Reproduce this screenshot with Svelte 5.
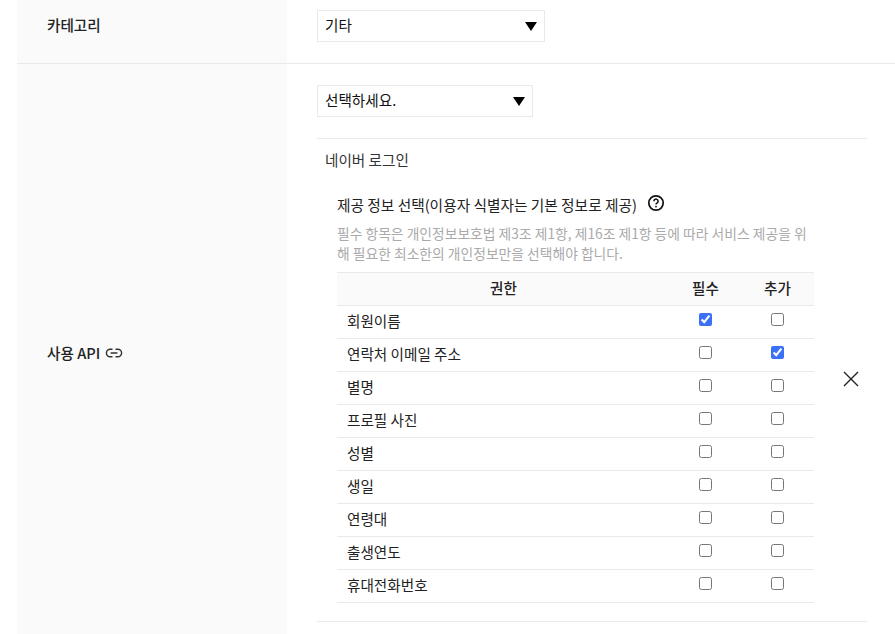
<script lang="ts">
	const perms = [
		{ name: '회원이름', required: true, extra: false },
		{ name: '연락처 이메일 주소', required: false, extra: true },
		{ name: '별명', required: false, extra: false },
		{ name: '프로필 사진', required: false, extra: false },
		{ name: '성별', required: false, extra: false },
		{ name: '생일', required: false, extra: false },
		{ name: '연령대', required: false, extra: false },
		{ name: '출생연도', required: false, extra: false },
		{ name: '휴대전화번호', required: false, extra: false }
	];
</script>

<div class="form">
	<div class="row first">
		<div class="label">카테고리</div>
		<div class="field">
			<div class="select cat">기타</div>
		</div>
	</div>

	<div class="row">
		<div class="label">
			사용 API
			<svg class="link" width="18" height="18" viewBox="0 0 18 18" fill="none" stroke="#333" stroke-width="1.4">
				<path d="M7.5 5.2H5.2a3.8 3.8 0 0 0 0 7.6h2.3M10.5 5.2h2.3a3.8 3.8 0 0 1 0 7.6h-2.3M5.6 9h6.8" />
			</svg>
		</div>
		<div class="field api">
			<div class="select pick">선택하세요.</div>

			<div class="api-block">
				<div class="api-body">
					<p class="api-name">네이버 로그인</p>
					<div class="info">
						<div class="info-title">
							제공 정보 선택(이용자 식별자는 기본 정보로 제공)
							<svg class="help" width="18" height="18" viewBox="0 0 18 18" fill="none">
								<circle cx="9" cy="9" r="7.2" stroke="#111" stroke-width="1.7" />
								<path d="M6.9 7.2a2.1 2.1 0 1 1 3.3 1.7c-.8.5-1.2.9-1.2 1.6" stroke="#111" stroke-width="1.5" />
								<circle cx="9" cy="12.6" r=".95" fill="#111" />
							</svg>
						</div>
						<p class="info-desc">필수 항목은 개인정보보호법 제3조 제1항, 제16조 제1항 등에 따라 서비스 제공을 위해 필요한 최소한의 개인정보만을 선택해야 합니다.</p>
						<table>
							<thead>
								<tr>
									<th>권한</th>
									<th class="check">필수</th>
									<th class="check">추가</th>
								</tr>
							</thead>
							<tbody>
								{#each perms as perm}
									<tr>
										<td class="name">{perm.name}</td>
										<td class="check"><input type="checkbox" checked={perm.required} /></td>
										<td class="check"><input type="checkbox" checked={perm.extra} /></td>
									</tr>
								{/each}
							</tbody>
						</table>
					</div>
				</div>
				<button class="close" aria-label="닫기">
					<svg width="16" height="16" viewBox="0 0 16 16" stroke="#222" stroke-width="1.4">
						<path d="M1 1l14 14M15 1L1 15" />
					</svg>
				</button>
			</div>
		</div>
	</div>
</div>

<style>
	:global(body) {
		margin: 0;
		background: #fff;
		overflow: hidden;
	}

	.form {
		margin-left: 17px;
		font-family: 'Noto Sans CJK KR', 'Noto Sans', sans-serif;
		font-size: 14.6px;
		color: #222;
	}

	.row {
		display: flex;
	}

	.first {
		height: 63px;
		border-bottom: 1px solid #e9e9e9;
	}

	.label {
		width: 240px;
		padding-left: 30px;
		background: #fafafa;
		font-weight: 500;
		display: flex;
		align-items: center;
		gap: 5px;
		flex: none;
	}

	.first .label {
		align-items: flex-start;
		padding-top: 14px;
		height: 49px;
	}

	.field {
		flex: 1;
		padding-left: 30px;
		padding-top: 10px;
	}

	.api {
		padding-top: 21px;
		padding-right: 28px;
		padding-bottom: 19px;
	}

	.select {
		position: relative;
		box-sizing: border-box;
		height: 32px;
		line-height: 28px;
		padding-left: 7px;
		border: 1px solid #e9e9e9;
		background: #fff;
		color: #111;
	}

	.select::after {
		content: '';
		position: absolute;
		right: 7px;
		top: 11px;
		border-left: 6.5px solid transparent;
		border-right: 6.5px solid transparent;
		border-top: 9px solid #000;
	}

	.cat {
		width: 228px;
	}

	.pick {
		width: 216px;
	}

	.api-block {
		display: flex;
		align-items: center;
		margin-top: 21px;
		border-top: 1px solid #e9e9e9;
		border-bottom: 1px solid #e9e9e9;
	}

	.api-body {
		width: 498px;
		flex: none;
		padding-bottom: 18px;
	}

	.api-name {
		margin: 0;
		padding: 10px 0 0 8px;
		line-height: 21px;
		color: #333;
	}

	.info {
		padding: 23px 0 0 20px;
	}

	.info-title {
		display: flex;
		align-items: center;
		gap: 10px;
		line-height: 24px;
		font-size: 14.7px;
	}

	.help {
		margin-top: -4px;
	}

	.info-desc {
		margin: 6px 0 9px;
		font-size: 13.8px;
		line-height: 20px;
		color: #aaa;
		width: 478px;
	}

	table {
		width: 477px;
		table-layout: fixed;
		border-collapse: collapse;
		border-top: 1px solid #e9e9e9;
	}

	th {
		box-sizing: border-box;
		height: 33px;
		padding: 0 0 3px;
		background: #fafafa;
		font-weight: 500;
		border-bottom: 1px solid #e9e9e9;
	}

	th.check {
		padding-right: 1px;
	}

	td {
		box-sizing: border-box;
		height: 33px;
		padding: 0 0 3px;
		border-bottom: 1px solid #e9e9e9;
	}

	.name {
		padding-left: 10px;
	}

	.check {
		width: 72px;
		text-align: center;
	}

	input {
		margin: 0 2px 6px 0;
		accent-color: #3b71f7;
	}

	.close {
		margin: 0 0 2px 28px;
		padding: 0;
		border: 0;
		background: none;
		line-height: 0;
	}
</style>
